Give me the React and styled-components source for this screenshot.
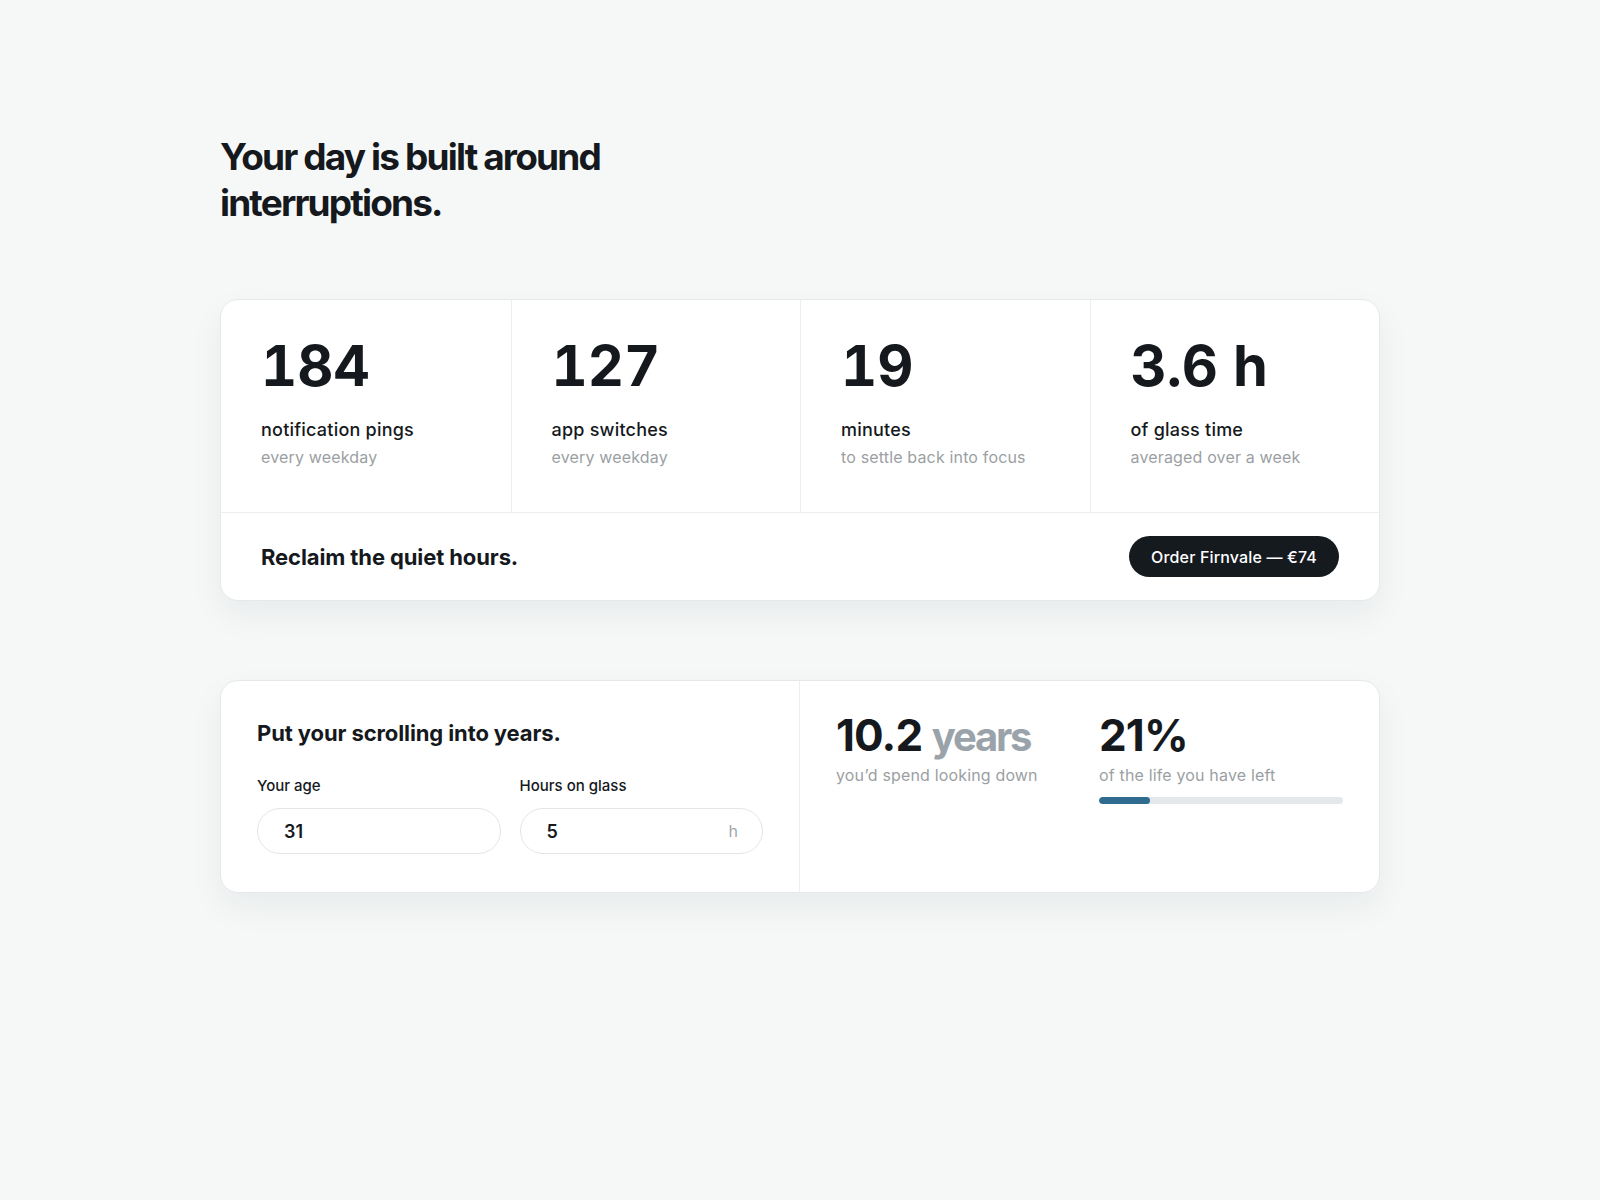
import styled, { createGlobalStyle } from "styled-components";

const GlobalStyle = createGlobalStyle`
  * { box-sizing: border-box; }
  body {
    margin: 0;
    background: #f6f8f8;
    font-family: Inter, "Noto Sans", sans-serif;
    color: #15191d;
  }
`;

const Page = styled.main`
  max-width: 1160px;
  margin: 0 auto;
  padding: 134px 0 120px;
`;

const Heading = styled.h1`
  margin: 0 0 73px;
  max-width: 420px;
  font-size: 37px;
  line-height: 46px;
  font-weight: 700;
  letter-spacing: -0.05em;
`;

const Card = styled.section`
  background: #fff;
  border: 1px solid #e6e9eb;
  border-radius: 18px;
  box-shadow: 0 14px 34px rgba(20, 32, 40, 0.06);
  overflow: hidden;
  margin-top: ${(p) => p.$gap || 0}px;
`;

const StatsRow = styled.div`
  display: grid;
  grid-template-columns: repeat(4, 1fr);
  border-bottom: 1px solid #eceef0;
`;

const StatCell = styled.div`
  padding: 38px 40px 44px;
  border-left: 1px solid #eceef0;
  &:first-child {
    border-left: none;
  }
`;

const BigNumber = styled.div`
  font-size: 56px;
  line-height: 1;
  font-weight: 700;
  font-variant-numeric: tabular-nums;
  letter-spacing: 0;
  margin-bottom: 24px;
`;

const StatLabel = styled.div`
  font-size: 18px;
  line-height: 24px;
  font-weight: 500;
  letter-spacing: 0.012em;
  margin-bottom: 4px;
`;

const StatNote = styled.div`
  font-size: 16px;
  line-height: 22px;
  color: #9b9fa3;
  letter-spacing: 0.01em;
`;

const Footer = styled.div`
  height: 87px;
  padding: 0 40px;
  display: flex;
  align-items: center;
  justify-content: space-between;
`;

const FooterTitle = styled.div`
  font-size: 22px;
  font-weight: 700;
  letter-spacing: -0.005em;
`;

const OrderButton = styled.button`
  all: unset;
  cursor: pointer;
  height: 41px;
  padding: 0 22px;
  border-radius: 999px;
  background: #151a1f;
  color: #fff;
  font-family: Inter, sans-serif;
  font-size: 16px;
  font-weight: 500;
  letter-spacing: 0.01em;
  display: inline-flex;
  align-items: center;
`;

const Split = styled.div`
  display: grid;
  grid-template-columns: 1fr 1fr;
`;

const FormSide = styled.div`
  padding: 38px 36px 38px;
  border-right: 1px solid #eceef0;
`;

const FormTitle = styled.h2`
  margin: 0 0 29px;
  font-size: 22px;
  line-height: 28px;
  font-weight: 700;
  letter-spacing: -0.005em;
`;

const Fields = styled.div`
  display: grid;
  grid-template-columns: 1fr 1fr;
  gap: 19px;
`;

const Field = styled.label`
  display: flex;
  flex-direction: column;
  gap: 12px;
`;

const FieldLabel = styled.span`
  font-size: 15px;
  line-height: 20px;
  font-weight: 500;
`;

const InputShell = styled.div`
  height: 46px;
  border: 1px solid #e3e6e8;
  border-radius: 999px;
  padding: 0 24px 0 26px;
  display: flex;
  align-items: center;
  justify-content: space-between;
`;

const Input = styled.input`
  all: unset;
  width: 100%;
  font-family: Inter, sans-serif;
  font-size: 18px;
  font-weight: 600;
  color: #15191d;
`;

const Unit = styled.span`
  font-size: 16px;
  color: #a3a7ab;
`;

const ResultSide = styled.div`
  padding: 32px 36px 36px;
  display: grid;
  grid-template-columns: 1fr 1fr;
  gap: 19px;
  align-items: start;
`;

const ResultNumber = styled.div`
  font-size: 44px;
  line-height: 1;
  font-weight: 700;
  letter-spacing: -0.02em;
  margin-bottom: 7px;
`;

const Muted = styled.span`
  color: #9aa3a9;
  font-size: 40px;
  letter-spacing: -0.055em;
`;

const Bar = styled.div`
  margin-top: 11px;
  height: 7px;
  border-radius: 999px;
  background: #e4e8ea;
  overflow: hidden;
`;

const BarFill = styled.div`
  height: 100%;
  border-radius: 999px;
  background: #2f6b8e;
`;

const stats = [
  { value: "184", label: "notification pings", note: "every weekday" },
  { value: "127", label: "app switches", note: "every weekday" },
  { value: "19", label: "minutes", note: "to settle back into focus" },
  { value: "3.6 h", label: "of glass time", note: "averaged over a week" },
];

export default function App() {
  const share = 21;
  return (
    <>
      <GlobalStyle />
      <Page>
        <Heading>Your day is built around interruptions.</Heading>

        <Card>
          <StatsRow>
            {stats.map((s) => (
              <StatCell key={s.label}>
                <BigNumber>{s.value}</BigNumber>
                <StatLabel>{s.label}</StatLabel>
                <StatNote>{s.note}</StatNote>
              </StatCell>
            ))}
          </StatsRow>
          <Footer>
            <FooterTitle>Reclaim the quiet hours.</FooterTitle>
            <OrderButton>Order Firnvale — €74</OrderButton>
          </Footer>
        </Card>

        <Card $gap={79}>
          <Split>
            <FormSide>
              <FormTitle>Put your scrolling into years.</FormTitle>
              <Fields>
                <Field>
                  <FieldLabel>Your age</FieldLabel>
                  <InputShell>
                    <Input defaultValue="31" />
                  </InputShell>
                </Field>
                <Field>
                  <FieldLabel>Hours on glass</FieldLabel>
                  <InputShell>
                    <Input defaultValue="5" />
                    <Unit>h</Unit>
                  </InputShell>
                </Field>
              </Fields>
            </FormSide>
            <ResultSide>
              <div>
                <ResultNumber>
                  10.2 <Muted>years</Muted>
                </ResultNumber>
                <StatNote>you’d spend looking down</StatNote>
              </div>
              <div>
                <ResultNumber>{share}%</ResultNumber>
                <StatNote>of the life you have left</StatNote>
                <Bar>
                  <BarFill style={{ width: `${share}%` }} />
                </Bar>
              </div>
            </ResultSide>
          </Split>
        </Card>
      </Page>
    </>
  );
}
